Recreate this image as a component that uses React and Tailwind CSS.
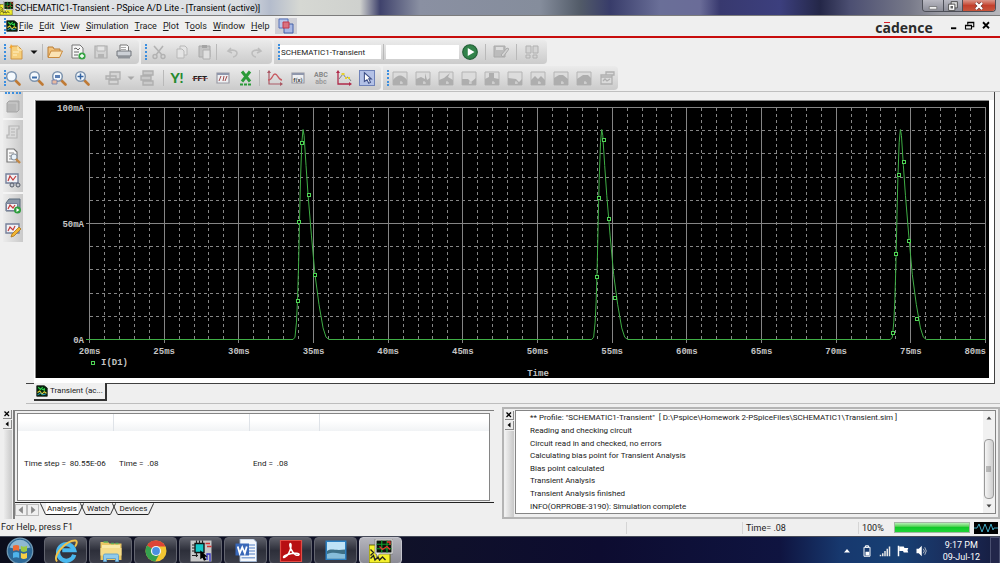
import React, {useState} from 'react'
import classNames from 'clsx'

const MENU_ITEMS = ['File', 'Edit', 'View', 'Simulation', 'Trace', 'Plot', 'Tools', 'Window', 'Help']
const MENU_KEYS = [0, 0, 0, 0, 0, 0, 1, 0, 0]

const OUTPUT_LINES = [
	'** Profile: "SCHEMATIC1-Transient"  [ D:\\Pspice\\Homework 2-PSpiceFiles\\SCHEMATIC1\\Transient.sim ]',
	'Reading and checking circuit',
	'Circuit read in and checked, no errors',
	'Calculating bias point for Transient Analysis',
	'Bias point calculated',
	'Transient Analysis',
	'Transient Analysis finished',
	'INFO(ORPROBE-3190): Simulation complete'
]

// one diode current pulse: [ms from the peak, mA]
const PULSE = [
	[-0.67, 0], [-0.54, 1], [-0.44, 7.5], [-0.37, 17], [-0.3, 32], [-0.24, 50], [-0.17, 69], [-0.08, 85], [0, 90.5],
	[0.07, 88], [0.2, 75], [0.34, 62], [0.56, 45], [0.8, 28], [1.07, 15], [1.34, 5], [1.54, 1], [1.74, 0]
]
const PEAKS = [34.3, 54.3, 74.3]
const MARKERS = [
	[33.93, 16.5], [34.06, 50.5], [34.23, 84.5], [34.67, 62.5], [35.1, 28],
	[53.99, 27], [54.13, 61], [54.43, 86], [54.8, 52], [55.2, 18],
	[73.81, 3], [74.02, 37], [74.2, 71], [74.55, 76.5], [74.89, 42.5], [75.43, 9]
]

const timeX = t => 53.5 + (t - 20) * 896 / 60
const currentY = mA => 238.5 - mA * 2.32

const Icon = ({children, className = 'w-4 h-4'}) => (
	<svg viewBox="0 0 16 16" className={classNames('block shrink-0', className)} fill="none" aria-hidden="true">{children}</svg>
)

const PSpiceIcon = ({className}) => (
	<Icon className={className}>
		<path d="M1 1h10l4 3v11H1z" fill="#06270c" stroke="#111" />
		<path d="M3 3l3 3 3-3M8 6h4M11 4v4" stroke="#2fd04a" strokeWidth="1.5" />
		<path d="M2 10l3-2 3 4 3-3 3 2" stroke="#e8d33c" strokeWidth="1.4" />
		<path d="M2 13l4-2 3 2 4-1" stroke="#37b6e0" strokeWidth="1.2" />
	</Icon>
)

const PSpiceAppIcon = ({className}) => (
	<Icon className={className}>
		<path d="M0 4h6v5h8v7H0z" fill="#f4f02c" stroke="#555500" strokeWidth=".6" />
		<path d="M1 13l2-2 1 3 2-2 1 2 2-2 2 2M1 7l2 2-2 2" stroke="#222" strokeWidth=".9" />
		<path d="M4 0h12v10H7l-2 2V10H4z" fill="#eee" stroke="#777" strokeWidth=".5" />
		<path d="M5 1h10v8H5z" fill="#0a120a" />
		<path d="M5 3.5h10M5 6.5h10M8.5 1v8M12 1v8" stroke="#0f9d2c" strokeWidth=".8" />
		<path d="M12 2h2v2M7 5l2 2 3-2 2 2" stroke="#e3362f" strokeWidth=".9" />
	</Icon>
)

const Magnifier = ({children}) => (
	<Icon>
		<path d="M9.5 9.5l5 5" stroke="#bf7a35" strokeWidth="2.6" strokeLinecap="round" />
		<circle cx="6.5" cy="6.5" r="4.8" fill="#f4f9fd" stroke="#7d93ad" strokeWidth="1.5" />
		{children}
	</Icon>
)

const PlotBox = ({children}) => (
	<Icon>
		<path d="M2 3h12v10H2z" fill="#eef0f3" stroke="#9a9aa4" strokeWidth="1.2" />
		<path d="M2 4h12" stroke="#8f97ac" strokeWidth="2" />
		{children}
	</Icon>
)

const CURSOR_SHAPES = [
	'M1 10q7-9 14 0v5H1z', 'M1 9l5-2 4 2V3l2 7 3-2v7H1z', 'M1 10l5-2 6-5-2 4 5 3v5H1z', 'M1 9h6l3 3 5-4v7H1z', 'M1 9l4-2V3h5v5l5 1v6H1z',
	'M1 8l8 1 3 3 3-3v6H1z', 'M1 10l4-4 3 3 3-3 4 4v5H1z', 'M1 8l5-3h4l5 4v6H1z', 'M1 9l6-4h5l3 3v7H1z'
]

const CursorIcon = ({shape}) => (
	<Icon>
		<path d="M1 2h14v13H1z" fill="#dcdcdc" stroke="#b4b4b4" />
		<path d={shape} fill="#aeaeae" />
		<path d="M9 11v3M8 13h3" stroke="#d8d8d8" />
	</Icon>
)

const FILE_TOOLS = {
	New: (
		<Icon>
			<path d="M3 2h7l4 4v9H3z" fill="#f6cf7c" stroke="#c98f3c" strokeWidth=".9" />
			<path d="M10 2v4h4M5 8h6M5 11h4" stroke="#fff1c6" />
			<path d="M3 0l1 2 2 0-2 1v2L3 4 1 4l1-1z" fill="#f4a52b" />
		</Icon>
	)
}

const OPEN_TOOLS = {
	Open: (
		<Icon>
			<path d="M1 13V3h5l1 2h6v3" fill="#f2c37c" stroke="#b97d35" />
			<path d="M1 13.5L4 7h11.5l-3 6.5z" fill="#fbe3b4" stroke="#c98a3e" />
		</Icon>
	),
	Append: (
		<Icon>
			<path d="M2 1h8l3 3v10H2z" fill="#f6f6f6" stroke="#777" />
			<path d="M4 5l2-1 2 2 2-2M4 8h5M4 11h4" stroke="#666" />
			<circle cx="12" cy="12" r="3.6" fill="#35a443" />
			<path d="M12 10v4M10 12h4" stroke="#fff" strokeWidth="1.3" />
		</Icon>
	),
	Save: (
		<Icon>
			<path d="M2 2h12v12H2z" fill="#d3d3d3" stroke="#adadad" strokeWidth="1.2" />
			<path d="M4 2h8v5H4z" fill="#e5e5e5" stroke="#b4b4b4" />
			<path d="M5 10h6v4H5z" fill="#b4b4b4" />
		</Icon>
	),
	Print: (
		<Icon>
			<path d="M4 7V1h7l1.5 1.5V7" fill="#fafafa" stroke="#777" />
			<path d="M1 7h14v5H1z" fill="#ccd0d6" stroke="#70747a" />
			<path d="M2 12h12v2.5H2z" fill="#8e9298" />
			<path d="M5 3.5h5M5 5.5h5" stroke="#aaa" />
		</Icon>
	)
}

const EDIT_TOOLS = {
	Cut: (
		<Icon>
			<path d="M3 2l8 9M12 2L5 11" stroke="#b2b2b2" strokeWidth="1.6" />
			<circle cx="4" cy="12.5" r="2" stroke="#b2b2b2" strokeWidth="1.4" />
			<circle cx="12" cy="12.5" r="2" stroke="#b2b2b2" strokeWidth="1.4" />
		</Icon>
	),
	Copy: (
		<Icon>
			<path d="M6 2h5l2 2v7H6z" fill="#e4e4e4" stroke="#b8b8b8" />
			<path d="M3 5h5l2 2v7H3z" fill="#e4e4e4" stroke="#b8b8b8" />
		</Icon>
	),
	Paste: (
		<Icon>
			<path d="M2 2h11v11H2z" fill="#c4c4c4" stroke="#a8a8a8" />
			<path d="M5 1h5v3H5z" fill="#a4a4a4" />
			<path d="M6 6h7v9H6z" fill="#e0e0e0" stroke="#b0b0b0" />
		</Icon>
	)
}

const UNDO_TOOLS = {
	Undo: <Icon><path d="M6 4L3 7l4 2M3 7c6-2 9 0 9 2s-2 4-4 4" stroke="#bdbdbd" strokeWidth="1.6" /></Icon>,
	Redo: <Icon><path d="M10 4l3 3-4 2M13 7C7 5 4 7 4 9s2 4 4 4" stroke="#bdbdbd" strokeWidth="1.6" /></Icon>
}

const ZOOM_TOOLS = {
	'Zoom area': <Magnifier />,
	'Zoom out': <Magnifier><path d="M4 7.5h5" stroke="#3d6ca8" strokeWidth="2" /></Magnifier>,
	'Zoom in': <Magnifier><path d="M4 8h5V5H4z" fill="#5b7fb4" /><path d="M1 10h5v4H1z" fill="#e7b8a0" stroke="#6a7fb0" strokeWidth=".8" /></Magnifier>,
	'Zoom fit': <Magnifier><path d="M3.5 6.5h6M6.5 3.5v6" stroke="#3565a3" strokeWidth="1.5" /></Magnifier>
}

const Y_TOOLS = {
	'Log X axis': (
		<Icon>
			<text x="8" y="13" fontSize="14" fontWeight="900" fill="#258a2f" fontFamily="Lato, sans-serif" textAnchor="middle">Y!</text>
		</Icon>
	),
	Fourier: (
		<Icon>
			<text x="8" y="11" fontSize="8" fontWeight="900" fill="#222" fontFamily="Roboto, sans-serif" textAnchor="middle">FFT</text>
			<path d="M0 8.5h16" stroke="#8a3030" strokeWidth=".6" />
		</Icon>
	),
	Performance: <PlotBox><path d="M4 11l2-5M8 11l1-5M10 11l2-5" stroke="#a14a4a" /></PlotBox>,
	'Log Y axis': (
		<Icon>
			<path d="M4 1.5l8 10M12 1.5l-8 10" stroke="#2a9a38" strokeWidth="3" />
			<path d="M2 14.5h12" stroke="#2a9a38" strokeWidth="2" strokeDasharray="3 1" />
		</Icon>
	)
}

const TRACE_TOOLS = {
	'Add trace': (
		<Icon>
			<path d="M2 1v13h13" stroke="#ab5a66" strokeWidth="1.2" />
			<path d="M1 10c5 0 4-6 7-6s3 6 7 6" stroke="#c85b62" strokeWidth="1.3" />
			<path d="M2 0L0 3h4zM16 14l-3-2v4z" fill="#ab5a66" />
		</Icon>
	),
	'Evaluate measurement': (
		<PlotBox><text x="8" y="11.5" fontSize="6" fontWeight="700" fill="#444" fontFamily="Roboto, sans-serif" textAnchor="middle">f(x)</text></PlotBox>
	),
	'Text label': (
		<Icon>
			<text x="8" y="7" fontSize="7" fontWeight="700" fill="#888" fontFamily="Roboto, sans-serif" textAnchor="middle">ABC</text>
			<text x="8" y="14" fontSize="7" fontWeight="700" fill="#999" fontFamily="Roboto, sans-serif" textAnchor="middle">abc</text>
		</Icon>
	),
	'Mark data points': (
		<Icon>
			<path d="M2 2v12h12" stroke="#b02a4a" strokeWidth="1.3" />
			<path d="M2 0L0 3h4zM16 14l-3-2v4z" fill="#b02a4a" />
			<path d="M3 9l4-5 3 4 2-1 3 4" stroke="#7a8288" />
			<path d="M5.5 3h3v2h-3zM9 7h2v2H9zM12 7h2v2h-2z" fill="#e5d02e" />
		</Icon>
	)
}

const SIDE_TOOLS = [
	{
		Stop: (
			<Icon>
				<path d="M4 3h10v9l-2 2H2V5z" fill="#b7b7b7" stroke="#a5a5a5" />
				<path d="M3 5h9v8" stroke="#cdcdcd" />
			</Icon>
		)
	},
	{
		'Edit profile': (
			<Icon>
				<path d="M4 2h10v3h-2v9H2v-3h2z" fill="#dadada" stroke="#b4b4b4" strokeWidth="1.2" />
				<path d="M6 5h4M6 8h4M6 11h4" stroke="#b4b4b4" />
			</Icon>
		),
		'View output': (
			<Icon>
				<path d="M2 1h7l3 3v10H2z" fill="#fafafa" stroke="#777" strokeWidth="1.2" />
				<path d="M4 5h5M4 8h3M4 11h3" stroke="#8b8b8b" />
				<circle cx="9" cy="9" r="3" fill="#eaf3fa" stroke="#8a95a1" strokeWidth="1.2" />
				<path d="M11 11l4 4" stroke="#c18644" strokeWidth="2.4" />
			</Icon>
		),
		'View results': (
			<Icon>
				<path d="M1 2h12v9H1z" fill="#f2f2f5" stroke="#76809a" strokeWidth="1.4" />
				<path d="M3 9l2-5 3 4 3-4" stroke="#c33b3b" strokeWidth="1.2" />
				<circle cx="7" cy="13" r="2" fill="#c5c9d1" stroke="#555b68" />
				<circle cx="13" cy="13" r="2" fill="#c5c9d1" stroke="#555b68" />
			</Icon>
		)
	},
	{
		'Run profile': (
			<Icon>
				<path d="M1 5l3-4h11v9l-2 3H1z" fill="#8b99a8" stroke="#5d6c7c" />
				<path d="M1.5 5.5h11v7h-11z" fill="#f4f4f6" stroke="#76809a" />
				<path d="M3 11l2-4 3 3 2-3" stroke="#c33b3b" strokeWidth="1.2" />
				<circle cx="12.5" cy="12" r="3.5" fill="#2f9e3d" />
				<path d="M11.5 10v4l3-2z" fill="#fff" />
			</Icon>
		),
		'Edit settings': (
			<Icon>
				<path d="M1 2h13v9H1z" fill="#f2f2f5" stroke="#76809a" strokeWidth="1.4" />
				<path d="M3 9l2-4 3 3 2-4" stroke="#c33b3b" strokeWidth="1.2" />
				<path d="M6 15l1-3 7-7 2 2-7 7z" fill="#f2b632" stroke="#a9741c" strokeWidth=".8" />
			</Icon>
		)
	}
]

const ToolButtons = ({tools, className}) => (
	<div className={classNames('flex items-center', className)}>
		{Object.entries(tools).map(([name, icon]) => (
			<button key={name} type="button" aria-label={name} className="flex flex-1 justify-center rounded-sm hover:bg-white/60">
				{icon}
			</button>
		))}
	</div>
)

const ToolBar = ({children, className}) => (
	<div className={classNames('flex h-6 items-center rounded-r-sm bg-linear-to-b from-[#ebebeb] to-[#cbcbcb] pl-1', className)}>
		<span className="h-4 border-l-2 border-dotted border-[#3c8fe0]" />
		{children}
	</div>
)

const Separator = () => <span className="h-4 w-px bg-[#b9b9b9]" />

const TitleBar = () => (
	<header className="flex h-4 items-start justify-between border-b border-[#7c7c7c] bg-[linear-gradient(90deg,#c9ced6_0%,#e0e3e7_3%,#dcdfe3_24%,#b4bccc_27%,#d6d8d3_30%,#cfd1ce_36%,#3f426c_38%,#8a90a2_42%,#858d9c_54%,#525b68_58%,#383c6a_61%,#6a6f98_66%,#6a6c98_70%,#38396f_72%,#3c3f7e_78%,#242748_82%,#4c4f72_85%,#777989_91%,#9a9ba4_94%,#b7b7bc_100%)]">
		<div className="flex items-center">
			<PSpiceAppIcon className="h-3.5 w-3.5" />
			<h1 className="pl-px text-[9px] leading-4 text-black">SCHEMATIC1-Transient - PSpice A/D Lite - [Transient (active)]</h1>
		</div>
		<div className="mr-1 flex h-3 overflow-hidden rounded-b-sm border border-t-0 border-[#4d4f58]">
			<button type="button" aria-label="Minimize" className="flex w-5 items-center justify-center bg-linear-to-b from-[#b9b9c2] to-[#8c8d98]">
				<Icon className="h-2.5 w-2.5"><path d="M2 9h12v4H2z" fill="#fff" stroke="#555" /></Icon>
			</button>
			<button type="button" aria-label="Restore" className="flex w-5 items-center justify-center border-x border-[#4d4f58] bg-linear-to-b from-[#b9b9c2] to-[#8c8d98]">
				<Icon className="h-2.5 w-2.5">
					<path d="M5 1h10v10H5z" fill="#ddd" stroke="#444" strokeWidth="1.4" />
					<path d="M1 5h10v10H1z" fill="#fff" stroke="#444" strokeWidth="1.4" />
					<path d="M4 8h4v4H4z" fill="#666" />
				</Icon>
			</button>
			<button type="button" aria-label="Close" className="flex w-8 items-center justify-center bg-linear-to-b from-[#d9968a] via-[#c2402c] to-[#c8553c]">
				<Icon className="h-2.5 w-2.5">
					<path d="M3 3l10 10M13 3L3 13" stroke="#5c2520" strokeWidth="5.5" />
					<path d="M3 3l10 10M13 3L3 13" stroke="#fff" strokeWidth="3.5" />
				</Icon>
			</button>
		</div>
	</header>
)

const MenuBar = () => (
	<nav className="flex h-[22px] items-center border-b-2 border-[#c80d0d] pr-2 pl-1">
		<span className="h-4 border-l-2 border-dotted border-[#3c8fe0]" />
		<PSpiceIcon className="h-3 w-3" />
		<div className="ml-px flex gap-1.5 text-[9px] leading-4">
			{MENU_ITEMS.map((item, i) => (
				<button key={item} type="button">
					{item.slice(0, MENU_KEYS[i])}<u>{item[MENU_KEYS[i]]}</u>{item.slice(MENU_KEYS[i] + 1)}
				</button>
			))}
		</div>
		<button type="button" aria-label="Arrange windows" className="ml-1.5 flex h-4 w-[22px] items-center justify-center bg-[#cfcfd6]">
			<Icon>
				<path d="M1 1h9v9H1z" fill="#b7c6ea" stroke="#5471b8" />
				<path d="M6 6h9v9H6z" fill="#a9b8e4" stroke="#4460a8" />
				<path d="M5 4h6v6H5z" fill="#d9727f" stroke="#c2394a" />
			</Icon>
		</button>
		<svg viewBox="0 0 64 20" className="ml-auto block h-5 w-16" role="img" aria-label="cadence">
			<text x="32" y="17" fontSize="14" fontWeight="700" fill="#2a2a2a" fontFamily="'Open Sans', sans-serif" textAnchor="middle">cadence</text>
			<path d="M12 6.500h6" stroke="#d8202c" />
		</svg>
		<div className="ml-3 flex gap-1">
			<button type="button" aria-label="Minimize plot"><Icon className="h-3 w-3"><path d="M4 11h7" stroke="#000" strokeWidth="2.5" /></Icon></button>
			<button type="button" aria-label="Restore plot">
				<Icon className="h-3 w-3"><path d="M5 6V3h8v6h-3M2 7h8v5H2zM5 3.500h8M2 7.500h8" stroke="#000" strokeWidth="1.5" /></Icon>
			</button>
			<button type="button" aria-label="Close plot"><Icon className="h-3 w-3"><path d="M4 3l8 8M12 3l-8 8" stroke="#000" strokeWidth="2.4" /></Icon></button>
		</div>
	</nav>
)

const ToolBars = () => {
	const [profile, updateProfile] = useState('SCHEMATIC1-Transient')
	const [search, updateSearch] = useState('')

	return (
		<div className="flex flex-col gap-0.5 border-b border-[#bfbfbf] pt-0.5 pb-px">
			<div className="flex gap-0.5">
				<ToolBar className="w-[139px]">
					<ToolButtons tools={FILE_TOOLS} className="w-5" />
					<button type="button" aria-label="New options" className="w-4"><Icon className="mx-auto h-2 w-2"><path d="M1 5h14l-7 7z" fill="#111" /></Icon></button>
					<Separator />
					<ToolButtons tools={OPEN_TOOLS} className="w-[92px]" />
				</ToolBar>
				<ToolBar className="w-[131px]">
					<ToolButtons tools={EDIT_TOOLS} className="w-[69px]" />
					<Separator />
					<ToolButtons tools={UNDO_TOOLS} className="ml-1 w-[46px]" />
				</ToolBar>
				<ToolBar className="w-[273px]">
					<input
						aria-label="Simulation profile"
						className="h-3.5 w-[101px] bg-white px-px text-[8px] leading-3 outline-none"
						value={profile}
						onChange={e => updateProfile(e.target.value)}
					/>
					<span className="mx-0.5 h-4 w-px bg-[#b9b9b9]" />
					<input
						aria-label="Search"
						className="h-3.5 w-[73px] bg-white px-px text-[8px] leading-3 outline-none"
						value={search}
						onChange={e => updateSearch(e.target.value)}
					/>
					<button type="button" aria-label="Run" className="mr-1.5 ml-0.5">
						<Icon className="h-[18px] w-[18px]">
							<circle cx="8" cy="8" r="6.5" fill="#32834a" stroke="#235f37" />
							<path d="M6 4.500v7l6-3.500z" fill="#fff" />
						</Icon>
					</button>
					<Separator />
					<ToolButtons
						className="w-[30px]"
						tools={{'Edit markers': <Icon><path d="M1 2h11v11H1z" fill="#bcbcbc" stroke="#aaa" /><path d="M3 3h7v3H3z" fill="#ddd" /><path d="M8 11l6-7 2 1-6 8z" fill="#d2d2d2" stroke="#aaa" /></Icon>}}
					/>
					<Separator />
					<ToolButtons
						className="w-[30px]"
						tools={{Pause: <Icon><path d="M2 2h5v7H2zM9 2h5v7H9zM2 11h4v3H2zM9 11h4v3H9z" fill="#d4d4d4" stroke="#b0b0b0" /></Icon>}}
					/>
				</ToolBar>
			</div>
			<div className="flex gap-0.5">
				<ToolBar className="w-[381px]">
					<ToolButtons tools={ZOOM_TOOLS} className="-ml-1 w-[91px]" />
					<button type="button" aria-label="Displays" className="ml-2.5 flex w-5 justify-center">
						<Icon><path d="M5 2h10v7H5zM1 6h10v3H1zM4 10h9v4H4z" fill="#d5d5d5" stroke="#b0b0b0" strokeWidth="1.3" /></Icon>
					</button>
					<button type="button" aria-label="Display options" className="w-4"><Icon className="mx-auto h-2 w-2"><path d="M1 5h14l-7 7z" fill="#a8a8a8" /></Icon></button>
					<button type="button" aria-label="Plot list" className="mr-2 flex w-4 justify-center">
						<Icon><path d="M4 1h10v4H4zM2 6h10v4H2zM4 11h10v4H4z" fill="#c9c9c9" stroke="#aeaeae" strokeWidth="1.3" /></Icon>
					</button>
					<Separator />
					<ToolButtons tools={Y_TOOLS} className="ml-0.5 w-[91px]" />
					<span className="mr-1 ml-0.5 h-4 w-px bg-[#b9b9b9]" />
					<ToolButtons tools={TRACE_TOOLS} className="w-[91px]" />
					<button type="button" aria-label="Select" aria-pressed="true" className="ml-1 flex h-4 w-4 items-center justify-center border border-[#6e82b8] bg-[#b3c1e6]">
						<Icon className="h-3.5 w-3.5"><path d="M5 2v10l3-2 2 4 2-1-2-4h3z" fill="#fff" stroke="#3c4e86" strokeWidth="1.2" /></Icon>
					</button>
				</ToolBar>
				<ToolBar className="w-[235px]">
					{CURSOR_SHAPES.map((shape, i) => (
						<button key={i} type="button" aria-label={'Cursor tool ' + (i + 1)} className="flex flex-1 justify-center">
							<CursorIcon shape={shape} />
						</button>
					))}
					<button type="button" aria-label="Mark label" className="flex flex-1 justify-center">
						<Icon><path d="M7 2h8v3H7zM2 5h11v9H2zM2 7h11M4 11l2-2 2 2 3-2" fill="#dadada" stroke="#b0b0b0" strokeWidth="1.3" /></Icon>
					</button>
				</ToolBar>
			</div>
		</div>
	)
}

const Plot = () => {
	const minorTimes = Array.from({length: 59}, (_, i) => 21 + i).filter(t => t % 5 !== 0)
	const majorTimes = Array.from({length: 13}, (_, i) => 20 + i * 5)
	const trace = PEAKS.map(peak => PULSE.map(([dt, mA]) => timeX(peak + dt) + ' ' + currentY(mA)).join(' L')).join(' L')

	return (
		<svg viewBox="0 0 953 277" className="block w-full bg-black font-['Liberation_Mono',monospace]" role="img" aria-label="I(D1) against time">
			<g stroke="#868686" strokeDasharray="3 3">
				{minorTimes.map(t => <path key={t} d={`M${Math.floor(timeX(t)) + 0.5} 7V238`} />)}
				{[10, 20, 30, 40, 60, 70, 80, 90].map(mA => <path key={mA} d={`M54 ${Math.floor(currentY(mA)) + 0.5}H949`} />)}
			</g>
			<g stroke="#858585">
				{majorTimes.map(t => <path key={t} d={`M${Math.floor(timeX(t)) + 0.5} 6V242`} />)}
				<path d="M50 6.500H949M50 122.500H949" />
			</g>
			<path d={`M50 238.500 L${trace} L949.500 238.500`} stroke="#3fae45" fill="none" />
			{MARKERS.map(([t, mA]) => (
				<rect key={t} x={Math.round(timeX(t)) - 1.5} y={Math.round(currentY(mA)) - 1.5} width="3" height="3" fill="#000" stroke="#4fd455" />
			))}
			<g fill="#c4c4c4" fontSize="9" fontWeight="700">
				<text x="48" y="10" textAnchor="end">100mA</text>
				<text x="48" y="126" textAnchor="end">50mA</text>
				<text x="48" y="242" textAnchor="end">0A</text>
				{majorTimes.map(t => (
					<text key={t} x={t === 80 ? 950 : timeX(t)} y="253" textAnchor={t === 80 ? 'end' : 'middle'}>{t}ms</text>
				))}
				<text x="502" y="275" textAnchor="middle">Time</text>
				<text x="65" y="264">I(D1)</text>
			</g>
			<rect x="55.500" y="260.500" width="3" height="3" fill="none" stroke="#4fd455" />
		</svg>
	)
}

const WorkArea = () => (
	<main className="flex">
		<aside className="w-[26px] shrink-0 pl-[3px]">
			<div className="flex w-5 flex-col bg-linear-to-r from-[#ececec] to-[#c9c9c9]">
				<span className="mx-0.5 border-t-2 border-dotted border-[#3c8fe0]" />
				{SIDE_TOOLS.map((tools, i) => (
					<div key={i} className={classNames('flex flex-col gap-2 py-1', {'border-b-2 border-[#f4f4f4]': i < 2})}>
						{Object.entries(tools).map(([name, icon]) => (
							<button key={name} type="button" aria-label={name} className="flex justify-center">{icon}</button>
						))}
					</div>
				))}
			</div>
		</aside>
		<section className="min-w-0 flex-1 border-b border-[#bdbdbd] pr-[5px]">
			<div className="border-r border-b border-[#404040] bg-[#efefef] pt-2">
				<div className="ml-2 border-r-[5px] border-b-4 border-l border-white bg-white pb-px">
					<div className="border-t border-l border-[#8a8a8a]">
						<Plot />
					</div>
				</div>
			</div>
			<div className="flex h-[19px] items-start pl-2">
				<button type="button" className="-mt-px flex h-[18px] items-center gap-0.5 border-r-2 border-b-2 border-[#333] bg-[#f0f0f0] px-0.5 text-[8px]">
					<PSpiceIcon className="h-3 w-3" />
					Transient (ac...
				</button>
			</div>
		</section>
	</main>
)

const DockButtons = () => (
	<div className="flex w-[11px] shrink-0 flex-col items-center gap-px">
		<button type="button" aria-label="Close pane" className="border-r border-b border-[#888] bg-[#ececec]">
			<Icon className="h-2 w-2"><path d="M3 3l9 9M12 3l-9 9" stroke="#000" strokeWidth="2.5" /></Icon>
		</button>
		<button type="button" aria-label="Collapse pane" className="border-r border-b border-[#888] bg-[#ececec]">
			<Icon className="h-2 w-2"><path d="M11 3v10L5 8z" fill="#000" /></Icon>
		</button>
		<span className="w-2 flex-1 bg-linear-to-r from-[#ececec] to-[#c8c8c8]" />
	</div>
)

const SheetTab = ({name, selected, onClick}) => (
	<button type="button" onClick={onClick} className="-mr-1 flex h-3 items-center">
		<Icon className="h-3 w-1.5"><path d="M1-7L15 23" stroke="#222" strokeWidth="2.4" /></Icon>
		<span className={classNames('border-b border-[#222] px-px leading-[11px]', {'bg-white': selected})}>{name}</span>
		<Icon className="h-3 w-1.5"><path d="M15-7L1 23" stroke="#222" strokeWidth="2.4" /></Icon>
	</button>
)

const AnalysisPane = () => {
	const [sheet, updateSheet] = useState('Analysis')

	return (
		<section className="mt-[3px] mr-2 flex min-w-0 flex-1 pl-0.5">
			<DockButtons />
			<div className="flex min-w-0 flex-1 flex-col border-t border-l-2 border-[#7f7f7f]">
				<div className="mt-0.5 mr-1 ml-0.5 flex-1 border border-[#858585] bg-white">
					<table className="h-full w-full table-fixed border-collapse text-left text-[8px]">
						<thead>
							<tr className="h-[17px] bg-linear-to-b from-white from-40% to-[#f1f3f5]">
								<th className="w-[95px] border-r border-[#dfe3e8]" />
								<th className="w-[136px] border-r border-[#dfe3e8]" />
								<th className="w-[70px] border-r border-[#dfe3e8]" />
								<th />
							</tr>
						</thead>
						<tbody>
							<tr className="whitespace-pre">
								<td className="pb-1 pl-1.5">{'Time step =  80.55E-06'}</td>
								<td className="pb-1 pl-1.5">{'Time =  .08'}</td>
								<td className="pb-1 pl-1">{'End =  .08'}</td>
								<td />
							</tr>
						</tbody>
					</table>
				</div>
				<div className="mt-px flex h-[17px] items-start border-t border-[#222] text-[8px]">
					<button type="button" aria-label="Previous sheet" className="mt-px border border-[#bbb]"><Icon className="h-2.5 w-2.5"><path d="M11 2v12L4 8z" fill="#888" /></Icon></button>
					<button type="button" aria-label="Next sheet" className="mt-px border border-[#bbb]"><Icon className="h-2.5 w-2.5"><path d="M5 2v12l7-6z" fill="#888" /></Icon></button>
					<div className="ml-px flex">
						{['Analysis', 'Watch', 'Devices'].map(name => (
							<SheetTab key={name} name={name} selected={name === sheet} onClick={() => updateSheet(name)} />
						))}
					</div>
				</div>
			</div>
		</section>
	)
}

const OutputPane = () => (
	<section className="flex min-w-0 flex-1 border-2 border-[#b4b4b4] pr-0.5">
		<div className="flex pt-0.5"><DockButtons /></div>
		<div className="mt-px mb-[3px] flex min-w-0 flex-1 border border-[#858585] bg-white">
			<ul className="flex min-w-0 flex-1 flex-col pt-px pl-3.5 text-[8px]">
				{OUTPUT_LINES.map(line => (
					<li key={line} className="flex flex-1 items-center leading-[12px] whitespace-pre">{line}</li>
				))}
			</ul>
			<div className="flex w-3 flex-col items-center bg-[#f1f1f1]">
				<button type="button" aria-label="Scroll up" className="flex h-3.5 items-center"><Icon className="h-2 w-2"><path d="M3 11h10L8 5z" fill="#444" /></Icon></button>
				<span className="mt-3.5 flex w-2.5 flex-1 items-center justify-center rounded-sm border border-[#999] bg-linear-to-r from-[#f5f5f5] to-[#cfcfcf]">
					<Icon className="h-2 w-2"><path d="M2 4h10M2 8h10M2 12h10" stroke="#666" strokeWidth="1.5" /></Icon>
				</span>
				<button type="button" aria-label="Scroll down" className="flex h-3.5 items-center"><Icon className="h-2 w-2"><path d="M3 5h10l-5 6z" fill="#444" /></Icon></button>
			</div>
		</div>
	</section>
)

const StatusBar = () => (
	<footer className="flex h-[17px] items-center pr-0.5 text-[9px]">
		<span className="flex-1 pl-px">For Help, press F1</span>
		<span className="h-3 w-[116px] border-l border-[#d5d5d5]" />
		<span className="w-[116px] border-l border-[#d5d5d5] pl-[3px] leading-3">Time= .08</span>
		<span className="w-9 border-l border-[#d5d5d5] pl-[3px] leading-3">100%</span>
		<span className="h-[11px] w-[76px] border border-[#a5b5a5] bg-linear-to-b from-[#b4f0b4] via-[#12c92a] via-50% to-[#1fd438]" />
		<svg viewBox="0 0 24 12" className="ml-1 h-3 w-6 bg-black" aria-hidden="true">
			<path d="M0 6h3l2-4 3 8 3-8 3 8 3-8 2 6 1-2h4" stroke="#3fa9c4" fill="none" />
		</svg>
	</footer>
)

const TASKS = {
	'Internet Explorer': (
		<Icon className="h-6 w-6">
			<path d="M13.5 10.5A5.5 5.5 0 1 1 13.5 7.5H5.5" stroke="#49b8ee" strokeWidth="2.8" />
			<path d="M2 15C-1 11 8 1 14 1c2 0 1 3 0 4" stroke="#f0c24a" strokeWidth="1.3" />
		</Icon>
	),
	Explorer: (
		<Icon className="h-6 w-6">
			<path d="M1 2h5l1 1h8v11H1z" fill="#e9c764" />
			<path d="M2 4h12v6H2z" fill="#f9eaa8" />
			<path d="M3 2h3M8 3h2M11 3h2" stroke="#5fae5a" />
			<path d="M1 6h14v5H1z" fill="#f4dc8a" />
			<path d="M3 15v-4q0-1 1-1h8q1 0 1 1v4h-2v-2H5v2z" fill="#8fcbec" stroke="#5b9ecb" strokeWidth=".6" />
		</Icon>
	),
	Chrome: (
		<Icon className="h-6 w-6">
			<circle cx="8" cy="8" r="7" fill="#f3c632" />
			<path d="M8 8L1.9 4.5A7 7 0 0 1 14.3 5H8z" fill="#dd4436" />
			<path d="M8 8L2 4.4A7 7 0 0 0 7.5 15l3-5.5z" fill="#35a04f" />
			<circle cx="8" cy="8" r="3.4" fill="#f5f5f5" />
			<circle cx="8" cy="8" r="2.6" fill="#4b8fe2" />
		</Icon>
	),
	Capture: (
		<Icon className="h-6 w-6">
			<path d="M1 1h14v14H1z" fill="#c9c9c9" />
			<path d="M4 3h6v6H4z" fill="#14c8c8" stroke="#111" strokeWidth=".9" />
			<path d="M2 4h2M2 6h2M2 8h2M5 1v2M7 1v2M9 1v2M5 9v3M2 11h4" stroke="#222" strokeWidth=".8" />
			<path d="M11 3h3M12 5h3" stroke="#d23636" />
			<path d="M12 14v-4h2v5" stroke="#3434c4" strokeWidth=".9" />
			<path d="M7.5 7.5v6l1.500-1 1 2 1.500-.7-1-2h1.800z" fill="#000" />
		</Icon>
	),
	Word: (
		<Icon className="h-6 w-6">
			<path d="M4 0h9l2 2v13H4z" fill="#f4f7fb" stroke="#9db3d3" strokeWidth=".6" />
			<path d="M10 4h4M10 6h4M10 8h4M10 10h4M5 12.500h9" stroke="#86a6d6" strokeWidth=".9" />
			<path d="M1 3h9v8H1z" fill="#3867b8" />
			<path d="M2.5 5l1.3 4.500L5.500 5.500l1.700 4L8.500 5" stroke="#fff" strokeWidth="1.2" />
		</Icon>
	),
	Reader: (
		<Icon className="h-6 w-6">
			<path d="M1 1h14v14H1z" fill="#b80f12" stroke="#e04d45" strokeWidth=".8" />
			<path d="M7.5 3c1 0 .5 4-1 6.500S3 12.800 3 12s5-2.800 8.500-2.500 1.500 2-.5 1C8.500 9 6.500 4 7.500 3z" stroke="#fff" strokeWidth="1" />
		</Icon>
	),
	Photos: (
		<Icon className="h-6 w-6">
			<path d="M1 1h14v13H1z" fill="#2b7fc0" />
			<path d="M2 2h12v11H2z" fill="#bfe3f7" />
			<path d="M2 8c3-2 5 0 12-1v6H2z" fill="#3d6f86" />
			<path d="M2 10c5-2 8 0 12 0v3H2z" fill="#87bdd9" />
		</Icon>
	),
	PSpice: <PSpiceAppIcon className="h-6 w-6" />
}

const TaskBar = () => (
	<footer className="mt-auto flex h-7 items-stretch border-t border-[#454a58] bg-[linear-gradient(90deg,#0b0d1c_0%,#101228_38%,#0d0c30_60%,#0f1440_78%,#17386e_84%,#174074_90%,#1b2a58_96%,#151c3e_100%)]">
		<button type="button" aria-label="Start" className="flex w-11 items-center pl-1.5">
			<Icon className="h-7 w-7">
				<circle cx="8" cy="8" r="7.3" fill="#2d6896" stroke="#7199b5" strokeWidth=".7" />
				<path d="M2 6a6.300 6.300 0 0 1 12 0q-6 2-12 0z" fill="#8fb8d2" />
				<path d="M4 5q2-1 3.500 0v3Q6 7 4 8z" fill="#ee6a35" />
				<path d="M8.500 5q1.500 1 3.500 0v3q-2 1-3.500 0z" fill="#9bc943" />
				<path d="M4 9q2-1 3.500 0v3Q6 11 4 12z" fill="#4fb3ea" />
				<path d="M8.500 9q1.500 1 3.500 0v3q-2 1-3.500 0z" fill="#f7cf45" />
			</Icon>
		</button>
		<div className="flex gap-0.5">
			{Object.entries(TASKS).map(([name, icon]) => (
				<button
					key={name}
					type="button"
					aria-label={name}
					className={classNames('flex w-[43px] items-center justify-center rounded-sm border', {
						'border-[#c5c5cd] bg-linear-to-b from-[#b5b5bd] to-[#8b8b95]': name === 'PSpice',
						'border-[#62646f] bg-linear-to-b from-[#5d5f69] via-[#2d2f3a] to-[#3c3e49]': name !== 'PSpice'
					})}
				>
					{icon}
				</button>
			))}
		</div>
		<div className="ml-auto flex items-center text-white">
			<div className="mr-4 flex items-center gap-1.5">
				<Icon className="mr-1 h-2 w-2"><path d="M2 11h12L8 4z" fill="#fff" /></Icon>
				<Icon className="h-3 w-3"><path d="M4 3h8v12H4zM6 1h4v2H6z" stroke="#fff" strokeWidth="1.3" /><path d="M6 9h5v5H6z" fill="#fff" /></Icon>
				<Icon className="h-3 w-3"><path d="M1 13h2v2H1zM4 11h2v4H4zM7 8h2v7H7zM10 5h2v10h-2zM13 2h2v13h-2z" fill="#e8e8e8" /></Icon>
				<Icon className="h-3 w-3"><path d="M1 1h2v14H1z" fill="#fff" /><path d="M3 2h6l1 2h5l-1 3 1 3H9L8 8H3z" fill="#fff" /></Icon>
				<Icon className="h-3 w-3"><path d="M2 5h3l4-4v14l-4-4H2z" fill="#fff" /><path d="M11 5q3 3 0 6M13 3q4 5 0 10" stroke="#ddd" /></Icon>
			</div>
			<div className="mr-2.5 text-center text-[9px] leading-[12px]">
				<p>9:17 PM</p>
				<p>09-Jul-12</p>
			</div>
			<button type="button" aria-label="Show desktop" className="h-full w-2.5 border border-[#4a4f70] bg-[#22264a]" />
		</div>
	</footer>
)

export default function App() {
	return (
		<div className="flex min-h-screen flex-col bg-[#efefef] font-[Roboto,sans-serif] text-[#1a1a1a]">
			<TitleBar />
			<MenuBar />
			<ToolBars />
			<WorkArea />
			<div className="mt-[3px] flex h-28">
				<AnalysisPane />
				<OutputPane />
			</div>
			<StatusBar />
			<TaskBar />
		</div>
	)
}
